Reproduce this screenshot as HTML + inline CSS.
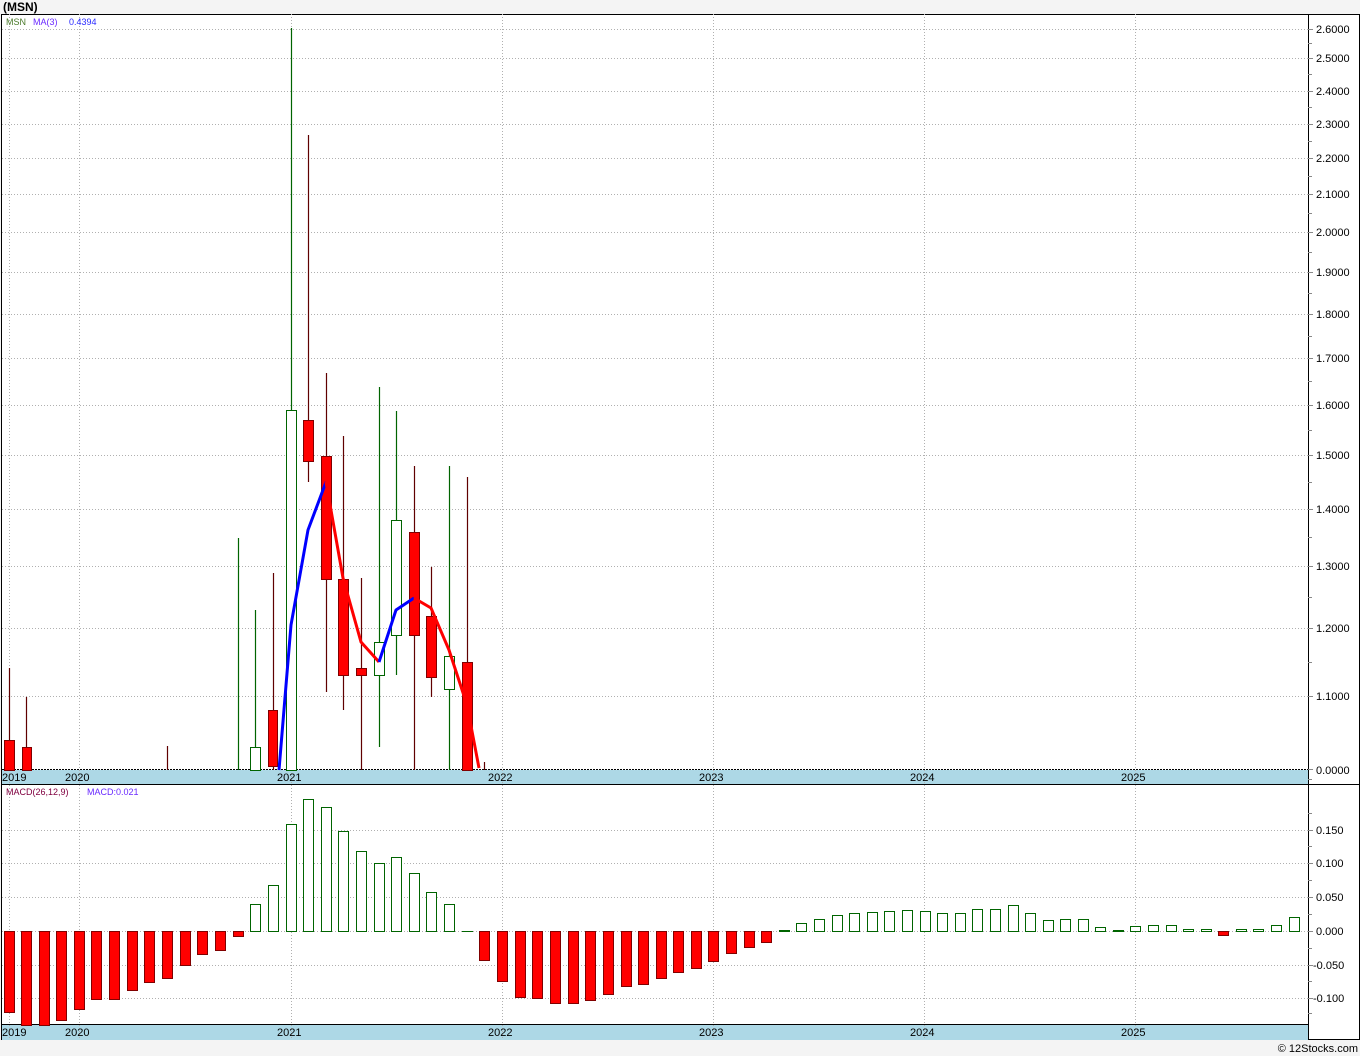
<!DOCTYPE html>
<html><head><meta charset="utf-8"><style>
html,body{margin:0;padding:0;background:#f4f4f4;}
svg{display:block;font-family:"Liberation Sans",Tahoma,sans-serif;}
</style></head><body>
<svg width="1360" height="1056" viewBox="0 0 1360 1056" xmlns="http://www.w3.org/2000/svg">
<rect x="0" y="0" width="1360" height="1056" fill="#f4f4f4"/>
<text x="3" y="11" font-size="12" font-weight="bold" fill="#000">(MSN)</text>
<rect x="1.5" y="14.5" width="1358" height="1025" fill="#fff" stroke="#000"/>
<rect x="2" y="770" width="1306" height="14" fill="#add8e6"/>
<rect x="2" y="1024" width="1306" height="16" fill="#add8e6"/>
<line x1="2" y1="784.5" x2="1360" y2="784.5" stroke="#000"/>
<line x1="2" y1="1024.5" x2="1308" y2="1024.5" stroke="#000"/>
<line x1="1308.5" y1="14" x2="1308.5" y2="1040" stroke="#000"/>
<g stroke="#b0b0b0" stroke-dasharray="1,2" stroke-width="1">
<line x1="2" x2="1308" y1="29.5" y2="29.5"/><line x1="2" x2="1308" y1="58.5" y2="58.5"/><line x1="2" x2="1308" y1="91.5" y2="91.5"/><line x1="2" x2="1308" y1="124.5" y2="124.5"/><line x1="2" x2="1308" y1="158.5" y2="158.5"/><line x1="2" x2="1308" y1="194.5" y2="194.5"/><line x1="2" x2="1308" y1="232.5" y2="232.5"/><line x1="2" x2="1308" y1="272.5" y2="272.5"/><line x1="2" x2="1308" y1="314.5" y2="314.5"/><line x1="2" x2="1308" y1="358.5" y2="358.5"/><line x1="2" x2="1308" y1="405.5" y2="405.5"/><line x1="2" x2="1308" y1="455.5" y2="455.5"/><line x1="2" x2="1308" y1="509.5" y2="509.5"/><line x1="2" x2="1308" y1="566.5" y2="566.5"/><line x1="2" x2="1308" y1="628.5" y2="628.5"/><line x1="2" x2="1308" y1="696.5" y2="696.5"/>
<line x1="2" x2="1308" y1="830.5" y2="830.5"/><line x1="2" x2="1308" y1="863.5" y2="863.5"/><line x1="2" x2="1308" y1="897.5" y2="897.5"/><line x1="2" x2="1308" y1="931.5" y2="931.5"/><line x1="2" x2="1308" y1="965.5" y2="965.5"/><line x1="2" x2="1308" y1="998.5" y2="998.5"/>
<line x1="9.5" x2="9.5" y1="14" y2="1040"/><line x1="79.5" x2="79.5" y1="14" y2="1040"/><line x1="291.5" x2="291.5" y1="14" y2="1040"/><line x1="502.5" x2="502.5" y1="14" y2="1040"/><line x1="713.5" x2="713.5" y1="14" y2="1040"/><line x1="924.5" x2="924.5" y1="14" y2="1040"/><line x1="1135.5" x2="1135.5" y1="14" y2="1040"/>
</g>
<line x1="2" x2="1308" y1="769.5" y2="769.5" stroke="#000" stroke-dasharray="2,1"/>
<g font-size="11" fill="#000">
<text x="2" y="781">2019</text><text x="65" y="781">2020</text><text x="277" y="781">2021</text><text x="488" y="781">2022</text><text x="699" y="781">2023</text><text x="910" y="781">2024</text><text x="1121" y="781">2025</text>
<text x="2" y="1036">2019</text><text x="65" y="1036">2020</text><text x="277" y="1036">2021</text><text x="488" y="1036">2022</text><text x="699" y="1036">2023</text><text x="910" y="1036">2024</text><text x="1121" y="1036">2025</text>
<text x="1316" y="33">2.6000</text><text x="1316" y="62">2.5000</text><text x="1316" y="95">2.4000</text><text x="1316" y="128">2.3000</text><text x="1316" y="162">2.2000</text><text x="1316" y="198">2.1000</text><text x="1316" y="236">2.0000</text><text x="1316" y="276">1.9000</text><text x="1316" y="318">1.8000</text><text x="1316" y="362">1.7000</text><text x="1316" y="409">1.6000</text><text x="1316" y="459">1.5000</text><text x="1316" y="513">1.4000</text><text x="1316" y="570">1.3000</text><text x="1316" y="632">1.2000</text><text x="1316" y="700">1.1000</text><text x="1316" y="774">0.0000</text>
<text x="1316" y="834">0.150</text><text x="1316" y="867">0.100</text><text x="1316" y="901">0.050</text><text x="1316" y="935">0.000</text><text x="1313" y="969">-0.050</text><text x="1313" y="1002">-0.100</text>
</g>
<g stroke="#888"><path d="M1308 29.5h5M1308 58.5h5M1308 91.5h5M1308 124.5h5M1308 158.5h5M1308 194.5h5M1308 232.5h5M1308 272.5h5M1308 314.5h5M1308 358.5h5M1308 405.5h5M1308 455.5h5M1308 509.5h5M1308 566.5h5M1308 628.5h5M1308 696.5h5M1308 769.5h5M1308 830.5h5M1308 863.5h5M1308 897.5h5M1308 931.5h5M1308 965.5h5M1308 998.5h5"/>
<path d="M1308 43.5h4M1308 74.5h4M1308 107.5h4M1308 141.5h4M1308 176.5h4M1308 213.5h4M1308 252.5h4M1308 293.5h4M1308 336.5h4M1308 381.5h4M1308 430.5h4M1308 482.5h4M1308 537.5h4M1308 597.5h4M1308 662.5h4M1308 779.5h4M1308 813.5h4M1308 846.5h4M1308 880.5h4M1308 914.5h4M1308 948.5h4M1308 981.5h4M1308 1013.5h4"/></g>
<text x="6" y="25" font-size="9" fill="#4a7a2a">MSN</text>
<text x="33" y="25" font-size="9" fill="#6a2aff">MA(3)</text>
<text x="69" y="25" font-size="9" fill="#2a2aff">0.4394</text>
<text x="6" y="795" font-size="9" fill="#800040">MACD(26,12,9)</text>
<text x="87" y="795" font-size="9" fill="#6a2aff">MACD:0.021</text>
<g stroke-width="1.2">
<g stroke="#600000">
<path d="M9.5 668V770M26.5 697V770M167.5 746V770M273.5 573V770M308.5 135V482M326.5 373V692M343.5 436V710M361.5 578V770M414.5 466V770M431.5 567V697M467.5 477V770M484.5 762V770"/>
</g>
<g stroke="#006400">
<path d="M238.5 538V770M255.5 610V770M291.5 28V770M379.5 387V747M396.5 411V675M449.5 466V770"/>
</g></g>
<g fill="#ff0000" stroke="#800000">
<rect x="4.5" y="740.5" width="10" height="30"/><rect x="22.5" y="747.5" width="9" height="23"/><rect x="268.5" y="710.5" width="9" height="56"/><rect x="303.5" y="420.5" width="10" height="41"/><rect x="321.5" y="456.5" width="10" height="123"/><rect x="338.5" y="579.5" width="10" height="96"/><rect x="356.5" y="668.5" width="10" height="7"/><rect x="409.5" y="532.5" width="10" height="103"/><rect x="426.5" y="616.5" width="10" height="61"/><rect x="462.5" y="662.5" width="10" height="108"/>
</g>
<g fill="#fff" stroke="#006400">
<rect x="250.5" y="747.5" width="10" height="23"/><rect x="286.5" y="410.5" width="10" height="360"/><rect x="374.5" y="642.5" width="10" height="33"/><rect x="391.5" y="520.5" width="10" height="115"/><rect x="444.5" y="656.5" width="10" height="33"/>
</g>
<g fill="none" stroke-width="3" stroke-linejoin="round">
<polyline stroke="#0000ff" points="279,770 291,625 308,530 326,482"/>
<polyline stroke="#ff0000" points="326,482 343,578 361,642 379,662"/>
<polyline stroke="#0000ff" points="379,662 396,610 414,598"/>
<polyline stroke="#ff0000" points="414,598 431,608 449,650 467,705 479,768"/>
</g>
<g fill="#ff0000" stroke="#800000">
<rect x="4.5" y="931.5" width="10" height="81"/><rect x="21.5" y="931.5" width="10" height="94"/><rect x="39.5" y="931.5" width="10" height="94"/><rect x="56.5" y="931.5" width="10" height="89"/><rect x="74.5" y="931.5" width="10" height="78"/><rect x="91.5" y="931.5" width="10" height="68"/><rect x="109.5" y="931.5" width="10" height="68"/><rect x="127.5" y="931.5" width="10" height="59"/><rect x="144.5" y="931.5" width="10" height="51"/><rect x="162.5" y="931.5" width="10" height="47"/><rect x="180.5" y="931.5" width="10" height="34"/><rect x="197.5" y="931.5" width="10" height="23"/><rect x="215.5" y="931.5" width="10" height="19"/><rect x="233.5" y="931.5" width="10" height="5"/>
<rect x="479.5" y="931.5" width="10" height="29"/><rect x="497.5" y="931.5" width="10" height="50"/><rect x="515.5" y="931.5" width="10" height="66"/><rect x="532.5" y="931.5" width="10" height="67"/><rect x="550.5" y="931.5" width="10" height="72"/><rect x="568.5" y="931.5" width="10" height="72"/><rect x="585.5" y="931.5" width="10" height="69"/><rect x="603.5" y="931.5" width="10" height="63"/><rect x="621.5" y="931.5" width="10" height="55"/><rect x="638.5" y="931.5" width="10" height="53"/><rect x="656.5" y="931.5" width="10" height="47"/><rect x="673.5" y="931.5" width="10" height="41"/><rect x="691.5" y="931.5" width="10" height="37"/><rect x="708.5" y="931.5" width="10" height="30"/><rect x="726.5" y="931.5" width="10" height="22"/><rect x="744.5" y="931.5" width="10" height="16"/><rect x="761.5" y="931.5" width="10" height="11"/><rect x="1218.5" y="931.5" width="10" height="4"/>
</g>
<g fill="#fff" stroke="#006400">
<rect x="250.5" y="904.5" width="10" height="27"/><rect x="268.5" y="885.5" width="10" height="46"/><rect x="286.5" y="824.5" width="10" height="107"/><rect x="303.5" y="799.5" width="10" height="132"/><rect x="321.5" y="807.5" width="10" height="124"/><rect x="338.5" y="831.5" width="10" height="100"/><rect x="356.5" y="851.5" width="10" height="80"/><rect x="374.5" y="863.5" width="10" height="68"/><rect x="391.5" y="857.5" width="10" height="74"/><rect x="409.5" y="873.5" width="10" height="58"/><rect x="426.5" y="892.5" width="10" height="39"/><rect x="444.5" y="904.5" width="10" height="27"/>
<rect x="779.5" y="930.5" width="10" height="1"/><rect x="796.5" y="923.5" width="10" height="8"/><rect x="814.5" y="919.5" width="10" height="12"/><rect x="832.5" y="915.5" width="10" height="16"/><rect x="849.5" y="913.5" width="10" height="18"/><rect x="867.5" y="912.5" width="10" height="19"/><rect x="884.5" y="911.5" width="10" height="20"/><rect x="902.5" y="910.5" width="10" height="21"/><rect x="920.5" y="911.5" width="10" height="20"/><rect x="937.5" y="913.5" width="10" height="18"/><rect x="955.5" y="913.5" width="10" height="18"/><rect x="972.5" y="909.5" width="10" height="22"/><rect x="990.5" y="909.5" width="10" height="22"/><rect x="1008.5" y="905.5" width="10" height="26"/><rect x="1025.5" y="913.5" width="10" height="18"/><rect x="1043.5" y="920.5" width="10" height="11"/><rect x="1060.5" y="919.5" width="10" height="12"/><rect x="1078.5" y="919.5" width="10" height="12"/><rect x="1095.5" y="927.5" width="10" height="4"/><rect x="1113.5" y="930.5" width="10" height="1"/><rect x="1130.5" y="926.5" width="10" height="5"/><rect x="1148.5" y="925.5" width="10" height="6"/><rect x="1166.5" y="925.5" width="10" height="6"/><rect x="1183.5" y="929.5" width="10" height="2"/><rect x="1201.5" y="929.5" width="10" height="2"/><rect x="1236.5" y="929.5" width="10" height="2"/><rect x="1253.5" y="929.5" width="10" height="2"/><rect x="1271.5" y="925.5" width="10" height="6"/><rect x="1289.5" y="917.5" width="10" height="14"/>
</g>
<line x1="462" x2="473" y1="931.5" y2="931.5" stroke="#006400"/>
<text x="1358" y="1052" font-size="11" fill="#000" text-anchor="end">© 12Stocks.com</text>
</svg>
</body></html>
